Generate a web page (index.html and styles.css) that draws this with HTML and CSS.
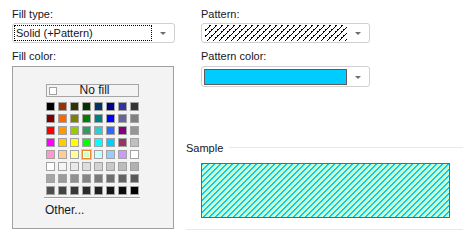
FILE: index.html
```html
<!DOCTYPE html>
<html lang="en">
<head>
	<meta charset="UTF-8">
	<title>Fill settings</title>
	<link rel="stylesheet" href="styles.css">
</head>
<body>
	<div class="dialog">
		<div class="col-left">
			<div class="label">Fill type:</div>
			<div class="combo">
				<div class="value focus">Solid (+Pattern)</div>
				<span class="arrow"></span>
			</div>
			<div class="label gap">Fill color:</div>
			<div class="panel">
				<div class="palette">
					<div class="nofill"><span class="check"></span><span class="nofill-text">No fill</span></div>
					<div class="grid" id="grid"></div>
					<div class="sep"></div>
					<div class="other">Other...</div>
				</div>
			</div>
		</div>
		<div class="col-right">
			<div class="field">
				<div class="label">Pattern:</div>
				<div class="combo">
					<div class="value hatch-box">
						<svg class="hatch" width="100%" height="100%">
							<defs>
								<pattern id="hatch-black" width="6" height="6" patternUnits="userSpaceOnUse">
									<path d="M5 0h1v1H5z M4 1h1v1H4z M3 2h1v1H3z M2 3h1v1H2z M1 4h1v1H1z M0 5h1v1H0z M4 0h1v1H4z M0 4h1v1H0z" fill="#000"/>
								</pattern>
							</defs>
							<rect width="100%" height="100%" fill="url(#hatch-black)"/>
						</svg>
					</div>
					<span class="arrow"></span>
				</div>
				<div class="label gap">Pattern color:</div>
				<div class="combo combo-color">
					<div class="value color-box"></div>
					<span class="arrow"></span>
				</div>
			</div>
			<div class="group-head">
				<span>Sample</span>
				<span class="rule"></span>
			</div>
			<div class="sample">
				<svg class="hatch" width="100%" height="100%">
					<defs>
						<pattern id="hatch-cyan" width="6" height="6" patternUnits="userSpaceOnUse">
							<path d="M5 0h1v1H5z M0 0h1v1H0z M4 1h2v1H4z M3 2h2v1H3z M2 3h2v1H2z M1 4h2v1H1z M0 5h2v1H0z" fill="#00ccff"/>
						</pattern>
					</defs>
					<rect width="100%" height="100%" fill="#ccffcc"/>
					<rect width="100%" height="100%" fill="url(#hatch-cyan)"/>
				</svg>
			</div>
			<div class="rule-bottom"></div>
		</div>
	</div>
<script>
	//palette colors, 8 x 8
	var colors = [
		"#000000","#993300","#333300","#003300","#003366","#000080","#333399","#333333",
		"#800000","#ff6600","#808000","#008000","#008080","#0000ff","#666699","#808080",
		"#ff0000","#ff9900","#99cc00","#339966","#33cccc","#3366ff","#800080","#969696",
		"#ff00ff","#ffcc00","#ffff00","#00ff00","#00ffff","#00ccff","#993366","#c0c0c0",
		"#ff99cc","#ffcc99","#ffff99","#ccffcc","#ccffff","#99ccff","#cc99ff","#ffffff"
	];
	//grey ramp for the last three rows
	for (var g = 0; g < 24; g++) {
		var v = Math.round(255 - g * 255 / 23);
		colors.push("rgb(" + v + "," + v + "," + v + ")");
	}
	var grid = document.getElementById("grid");
	for (var i = 0; i < colors.length; i++) {
		var cell = document.createElement("span");
		cell.className = "swatch";
		if (i == 35) {
			cell.className = "swatch current";
		}
		cell.style.backgroundColor = colors[i];
		grid.appendChild(cell);
	}
</script>
</body>
</html>
```

FILE: styles.css
```css
* {
	padding: 0;
	margin: 0;
	box-sizing: border-box;
}
body {
	font: 11px/16px "Liberation Sans", Arial, sans-serif;
	color: #16161e;
	background: #fff;
}
.dialog {
	display: flex;
	gap: 11px;
	padding: 6px 0 0 12px;
}
.col-left {
	width: 163px;
}
.col-right {
	width: 277px;
}
.label {
	height: 16px;
	white-space: nowrap;
}
.label.gap {
	margin-top: 5px;
}
.combo {
	margin-top: 1px;
	height: 20px;
	border: 1px solid #d0d0d0;
	border-radius: 3px;
	background: #fff;
	display: flex;
	align-items: center;
	padding: 0 0 0 1px;
}
.combo .value {
	flex: 1;
	height: 16px;
}
.focus {
	border: 1px dotted #000;
	line-height: 14px;
	padding-left: 1px;
	white-space: nowrap;
}
.arrow {
	width: 22px;
	height: 16px;
	position: relative;
}
.arrow:after {
	content: '';
	position: absolute;
	left: 8px;
	top: 7px;
	border-left: 3px solid transparent;
	border-right: 3px solid transparent;
	border-top: 3px solid #6d6d6d;
}
.hatch-box {
	margin-left: 2px;
}
.hatch {
	display: block;
	shape-rendering: crispEdges;
}
.combo-color {
	margin-top: 2px;
	height: 21px;
}
.color-box {
	margin-left: 1px;
	background: #00ccff;
	border: 1px solid #5c5c5c;
}
.panel {
	margin-top: 2px;
	width: 162px;
	height: 163px;
	border: 1px solid #a0a0a0;
	background: #f3f3f3;
	padding: 17px 0 0 31px;
}
.palette {
	width: 96px;
}
.nofill {
	margin-left: 2px;
	width: 93px;
	height: 13px;
	border: 1px solid #a6a6a6;
	display: flex;
	align-items: center;
	position: relative;
}
.check {
	margin-left: 2px;
	width: 8px;
	height: 8px;
	border: 1px solid #a0a0a0;
	background: #fff;
}
.nofill-text {
	flex: 1;
	text-align: center;
	line-height: 11px;
	font-size: 12px;
	padding-right: 6px;
}
.grid {
	margin: 5px 0 0 2px;
	width: 93px;
	display: grid;
	grid-template-columns: repeat(8, 9px);
	grid-auto-rows: 9px;
	gap: 3px;
}
.swatch {
	display: block;
	border: 1px solid #a3a3a3;
}
.swatch.current {
	border-color: #e8892c;
	box-shadow: 0 0 0 1px #f7c38c, inset 0 0 0 1px #fff;
}
.sep {
	margin-top: 2px;
	height: 2px;
	border-top: 1px solid #a0a0a0;
	border-bottom: 1px solid #fff;
}
.other {
	margin-top: 3px;
	padding-left: 1px;
	font-size: 12px;
}
.field {
	margin-left: 15px;
	width: 169px;
}
.group-head {
	margin-top: 53px;
	height: 16px;
	display: flex;
	align-items: center;
}
.group-head .rule {
	flex: 1;
	height: 1px;
	margin: 0 0 1px 6px;
	background: #e8e8e8;
}
.sample {
	margin: 7px 0 0 15px;
	width: 249px;
	height: 55px;
	border: 1px solid #666;
}
.rule-bottom {
	margin-top: 11px;
	height: 1px;
	background: #e8e8e8;
}
```
